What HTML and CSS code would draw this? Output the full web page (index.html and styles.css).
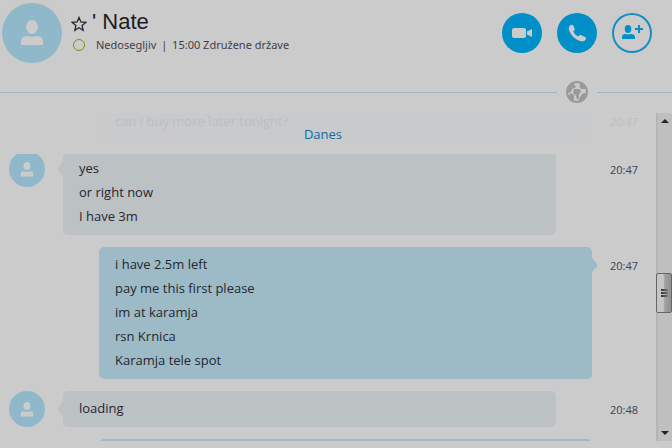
FILE: index.html
```
<!DOCTYPE html>
<html lang="sl">
<head>
    <meta charset="UTF-8">
    <title>Nate</title>
    <link rel="stylesheet" href="styles.css">
</head>
<body>
    <svg class="symbols" aria-hidden="true">
        <symbol id="person" viewBox="0 0 24 26">
            <ellipse cx="12" cy="7" rx="6" ry="7"/>
            <path d="M1 25v-3c0-4 2-6 6-6 2 1 8 1 10 0 4 0 6 2 6 6v3z"/>
        </symbol>
    </svg>

    <header class="header">
        <div class="avatar avatar--large"><svg><use href="#person"/></svg></div>
        <div class="contact">
            <div class="contact__row">
                <svg class="star" viewBox="0 0 16 16"><path d="M8 1.500l1.900 4.500 4.900.4-3.700 3.200 1.100 4.700L8 11.800l-4.200 2.500 1.100-4.700L1.200 6.400l4.900-.4z"/></svg>
                <h1 class="contact__name">' Nate</h1>
            </div>
            <div class="contact__row">
                <span class="presence"></span>
                <p class="contact__status">Nedosegljiv <span class="bar">|</span> 15:00 Združene države</p>
            </div>
        </div>
        <div class="actions">
            <button type="button" class="action" aria-label="Video">
                <svg viewBox="0 0 40 40"><rect x="10" y="15" width="14" height="10" rx="2"/><path d="M25 18.500l5-2.500v8l-5-2.500z"/></svg>
            </button>
            <button type="button" class="action" aria-label="Call">
                <svg viewBox="0 0 40 40"><path d="M13 12.500c1.500-1.200 3-.6 3.600.8l1 2.500c.4 1-.2 1.800-1.300 2.800 1 2.300 2.600 3.900 4.900 5 1.100-1.300 2-1.800 3.100-1.300l3.300 1.400c1.500.7 1.900 1.800.9 3.100-1.700 2.200-5.200 2-8.800-.2-3.600-2.300-6.200-5.400-7.400-8.600-.8-2.400-.6-4.300.7-5.500z"/></svg>
            </button>
            <button type="button" class="action action--outline" aria-label="Add people">
                <svg viewBox="0 0 40 40"><ellipse cx="16" cy="16" rx="3.300" ry="4"/><path d="M10 26v-1.500c0-2.500 1.200-3.500 3.500-3.500 1.500.6 3.700.6 5.200 0 2.600 0 4.300 1 4.300 3.500V26zM26 12h2v3h3v2h-3v3h-2v-3h-3v-2h3z"/></svg>
            </button>
        </div>
    </header>

    <div class="divider">
        <span class="divider__line"></span>
        <svg class="globe" viewBox="0 0 22 22">
            <circle class="globe__ring" cx="11" cy="11" r="10"/>
            <path d="M2 8c1-3 3-5 6-6v2l2 1-1 2-3 1-1 3-3 1zM8 8h6l1 3-2 2v4l-2 2-1-4-3-3zM14 2c3 .5 5 2 6.500 5l-1 1h-4l-2-2zM3 14l2-2 3 2v4l-1 2c-2-1-4-3-4-6zM14 16l2-3 2-1h2c0 4-2 7-5 8l-3 1z"/>
        </svg>
        <span class="divider__line divider__line--end"></span>
    </div>

    <main class="chat">
        <section class="messages">
            <div class="history">
                <div class="message message--sent message--faded">
                    <div class="bubble"><p>can i buy more later tonight?</p></div>
                    <time class="message__time">20:47</time>
                </div>
                <span class="history__day">Danes</span>
            </div>
            <div class="list">
                <div class="message">
                    <div class="avatar"><svg><use href="#person"/></svg></div>
                    <div class="bubble">
                        <p>yes</p>
                        <p>or right now</p>
                        <p>I have 3m</p>
                    </div>
                    <time class="message__time">20:47</time>
                </div>
                <div class="message message--sent">
                    <div class="bubble">
                        <p>i have 2.5m left</p>
                        <p>pay me this first please</p>
                        <p>im at karamja</p>
                        <p>rsn Krnica</p>
                        <p>Karamja tele spot</p>
                    </div>
                    <time class="message__time">20:47</time>
                </div>
                <div class="message">
                    <div class="avatar"><svg><use href="#person"/></svg></div>
                    <div class="bubble"><p>loading</p></div>
                    <time class="message__time">20:48</time>
                </div>
                <div class="message message--sent">
                    <div class="bubble"></div>
                </div>
            </div>
        </section>
        <div class="scrollbar">
            <button type="button" class="scrollbar__arrow" aria-label="Scroll up"><svg viewBox="0 0 8 4"><path d="M0 4l4-4 4 4z"/></svg></button>
            <span class="scrollbar__before"></span>
            <div class="scrollbar__thumb"><span></span><span></span><span></span></div>
            <span class="scrollbar__after"></span>
            <button type="button" class="scrollbar__arrow" aria-label="Scroll down"><svg viewBox="0 0 8 4"><path d="M0 0l4 4 4-4z"/></svg></button>
        </div>
    </main>
</body>
</html>
```
FILE: styles.css
```
*, *::after, *::before {
    margin: 0;
    padding: 0;
    box-sizing: border-box;
}

body {
    height: 100vh;
    display: flex;
    flex-direction: column;
    overflow: hidden;
    padding-bottom: 7px;
    font-family: "Open Sans", "Noto Sans", sans-serif;
    font-size: 13px;
    line-height: 24px;
    background-color: #cbcbcb;
    color: #26262e;
}

button {
    border: none;
    background: none;
    cursor: pointer;
}

.symbols {
    position: absolute;
    width: 0;
    height: 0;
}

/* Header */
.header {
    display: flex;
    align-items: flex-start;
    padding: 3px 20px 0 2px;
}

.avatar {
    display: flex;
    justify-content: center;
    align-items: center;
    width: 36px;
    height: 36px;
    border-radius: 50%;
    background-color: #8fb9ca;
}

.avatar svg {
    width: 14px;
    height: 15px;
    fill: #cbcbcb;
}

.avatar--large {
    width: 60px;
    height: 60px;
}

.avatar--large svg {
    width: 24px;
    height: 26px;
}

.contact {
    flex: 1;
    padding: 6px 0 0 9px;
}

.contact__row {
    display: flex;
    align-items: center;
}

.star {
    width: 16px;
    height: 16px;
    margin-top: 4px;
    fill: none;
    stroke: #26262e;
    stroke-width: 1.3;
}

.contact__name {
    margin-left: 5px;
    font-family: "Liberation Sans", sans-serif;
    font-size: 22px;
    font-weight: 400;
    line-height: 26px;
    color: #1c1c20;
}

.presence {
    width: 12px;
    height: 12px;
    margin-left: 2px;
    border: 1px solid #6b9a10;
    border-radius: 50%;
}

.contact__status {
    margin-left: 11px;
    font-family: "Noto Sans", sans-serif;
    font-size: 11px;
    line-height: 20px;
    color: #40404a;
}

.bar {
    margin: 0 2px;
}

.actions {
    display: flex;
    gap: 15px;
    padding-top: 10px;
}

.action {
    width: 40px;
    height: 40px;
    border-radius: 50%;
    background-color: #008fc6;
}

.action svg {
    display: block;
    width: 40px;
    height: 40px;
    fill: #cbcbcb;
}

.action--outline {
    background: none;
    box-shadow: inset 0 0 0 2px #148fc2;
}

.action--outline svg {
    fill: #008fc6;
}

/* Divider */
.divider {
    display: flex;
    align-items: center;
    gap: 9px;
    padding: 18px 0 10px;
}

.divider__line {
    flex: 1;
    height: 1px;
    background-color: #a3b5c4;
}

.divider__line--end {
    flex: 0 0 75px;
}

.globe {
    width: 22px;
    height: 22px;
    fill: #999;
}

.globe__ring {
    fill: none;
    stroke: #999;
    stroke-width: 2;
}

/* Conversation */
.chat {
    flex: 1;
    display: flex;
    min-height: 0;
}

.messages {
    flex: 1;
    overflow: hidden;
}

.history {
    position: relative;
    z-index: 1;
    height: 41px;
    background-color: #cbcbcb;
}

.history__day {
    position: absolute;
    top: 9px;
    left: 0;
    right: 10px;
    text-align: center;
    color: #0f6ba3;
}

.list {
    display: grid;
    gap: 12px;
    margin-top: -3px;
}

.message {
    display: grid;
    grid-template-columns: 63px 36px 1fr 36px 64px;
}

.message .avatar {
    grid-column: 1;
    grid-row: 1;
    margin-left: 9px;
}

.bubble {
    position: relative;
    grid-column: 2 / 4;
    grid-row: 1;
    min-height: 36px;
    padding: 5px 16px 7px;
    border-radius: 5px;
    background-color: #bcc1c4;
}

.bubble::before {
    content: "";
    position: absolute;
    top: 11px;
    left: -5px;
    width: 5px;
    height: 14px;
    background-color: inherit;
    clip-path: polygon(0 40%, 100% 0, 100% 100%, 0 60%);
}

.message--sent .bubble {
    grid-column: 3 / 5;
    background-color: #9dbbc7;
}

.message--sent .bubble::before {
    left: auto;
    right: -5px;
    clip-path: polygon(0 0, 100% 40%, 100% 60%, 0 100%);
}

.message__time {
    grid-column: 5;
    grid-row: 1;
    padding: 7px 0 0 18px;
    font-size: 11px;
    color: #44404e;
}

.message--faded {
    line-height: 16px;
}

.message--faded .bubble {
    min-height: 0;
    padding: 0 16px 10px;
    border-radius: 0 0 5px 5px;
    background-color: #c8cacc;
    color: #bdbfc0;
}

.message--faded .bubble::before {
    display: none;
}

.message--faded .message__time {
    padding-top: 1px;
    color: #bfbfc0;
}

/* Scrollbar */
.scrollbar {
    display: flex;
    flex-direction: column;
    width: 16px;
    border-left: 2px solid #b5b5b5;
    background-color: #bfbfbf;
}

.scrollbar__arrow {
    display: flex;
    justify-content: center;
    align-items: center;
    height: 16px;
}

.scrollbar__arrow svg {
    width: 8px;
    height: 4px;
    fill: #222;
}

.scrollbar__before {
    flex: 9;
}

.scrollbar__after {
    flex: 7;
}

.scrollbar__thumb {
    display: flex;
    flex-direction: column;
    justify-content: center;
    align-items: center;
    gap: 1px;
    height: 40px;
    margin-left: -2px;
    border: 1px solid #666;
    border-radius: 2px;
    background: linear-gradient(to right, #c6c6c6 45%, #a2a2a4 55%, #8f8f92);
}

.scrollbar__thumb span {
    width: 7px;
    height: 2px;
    background: linear-gradient(to right, #333, #777);
}
```
